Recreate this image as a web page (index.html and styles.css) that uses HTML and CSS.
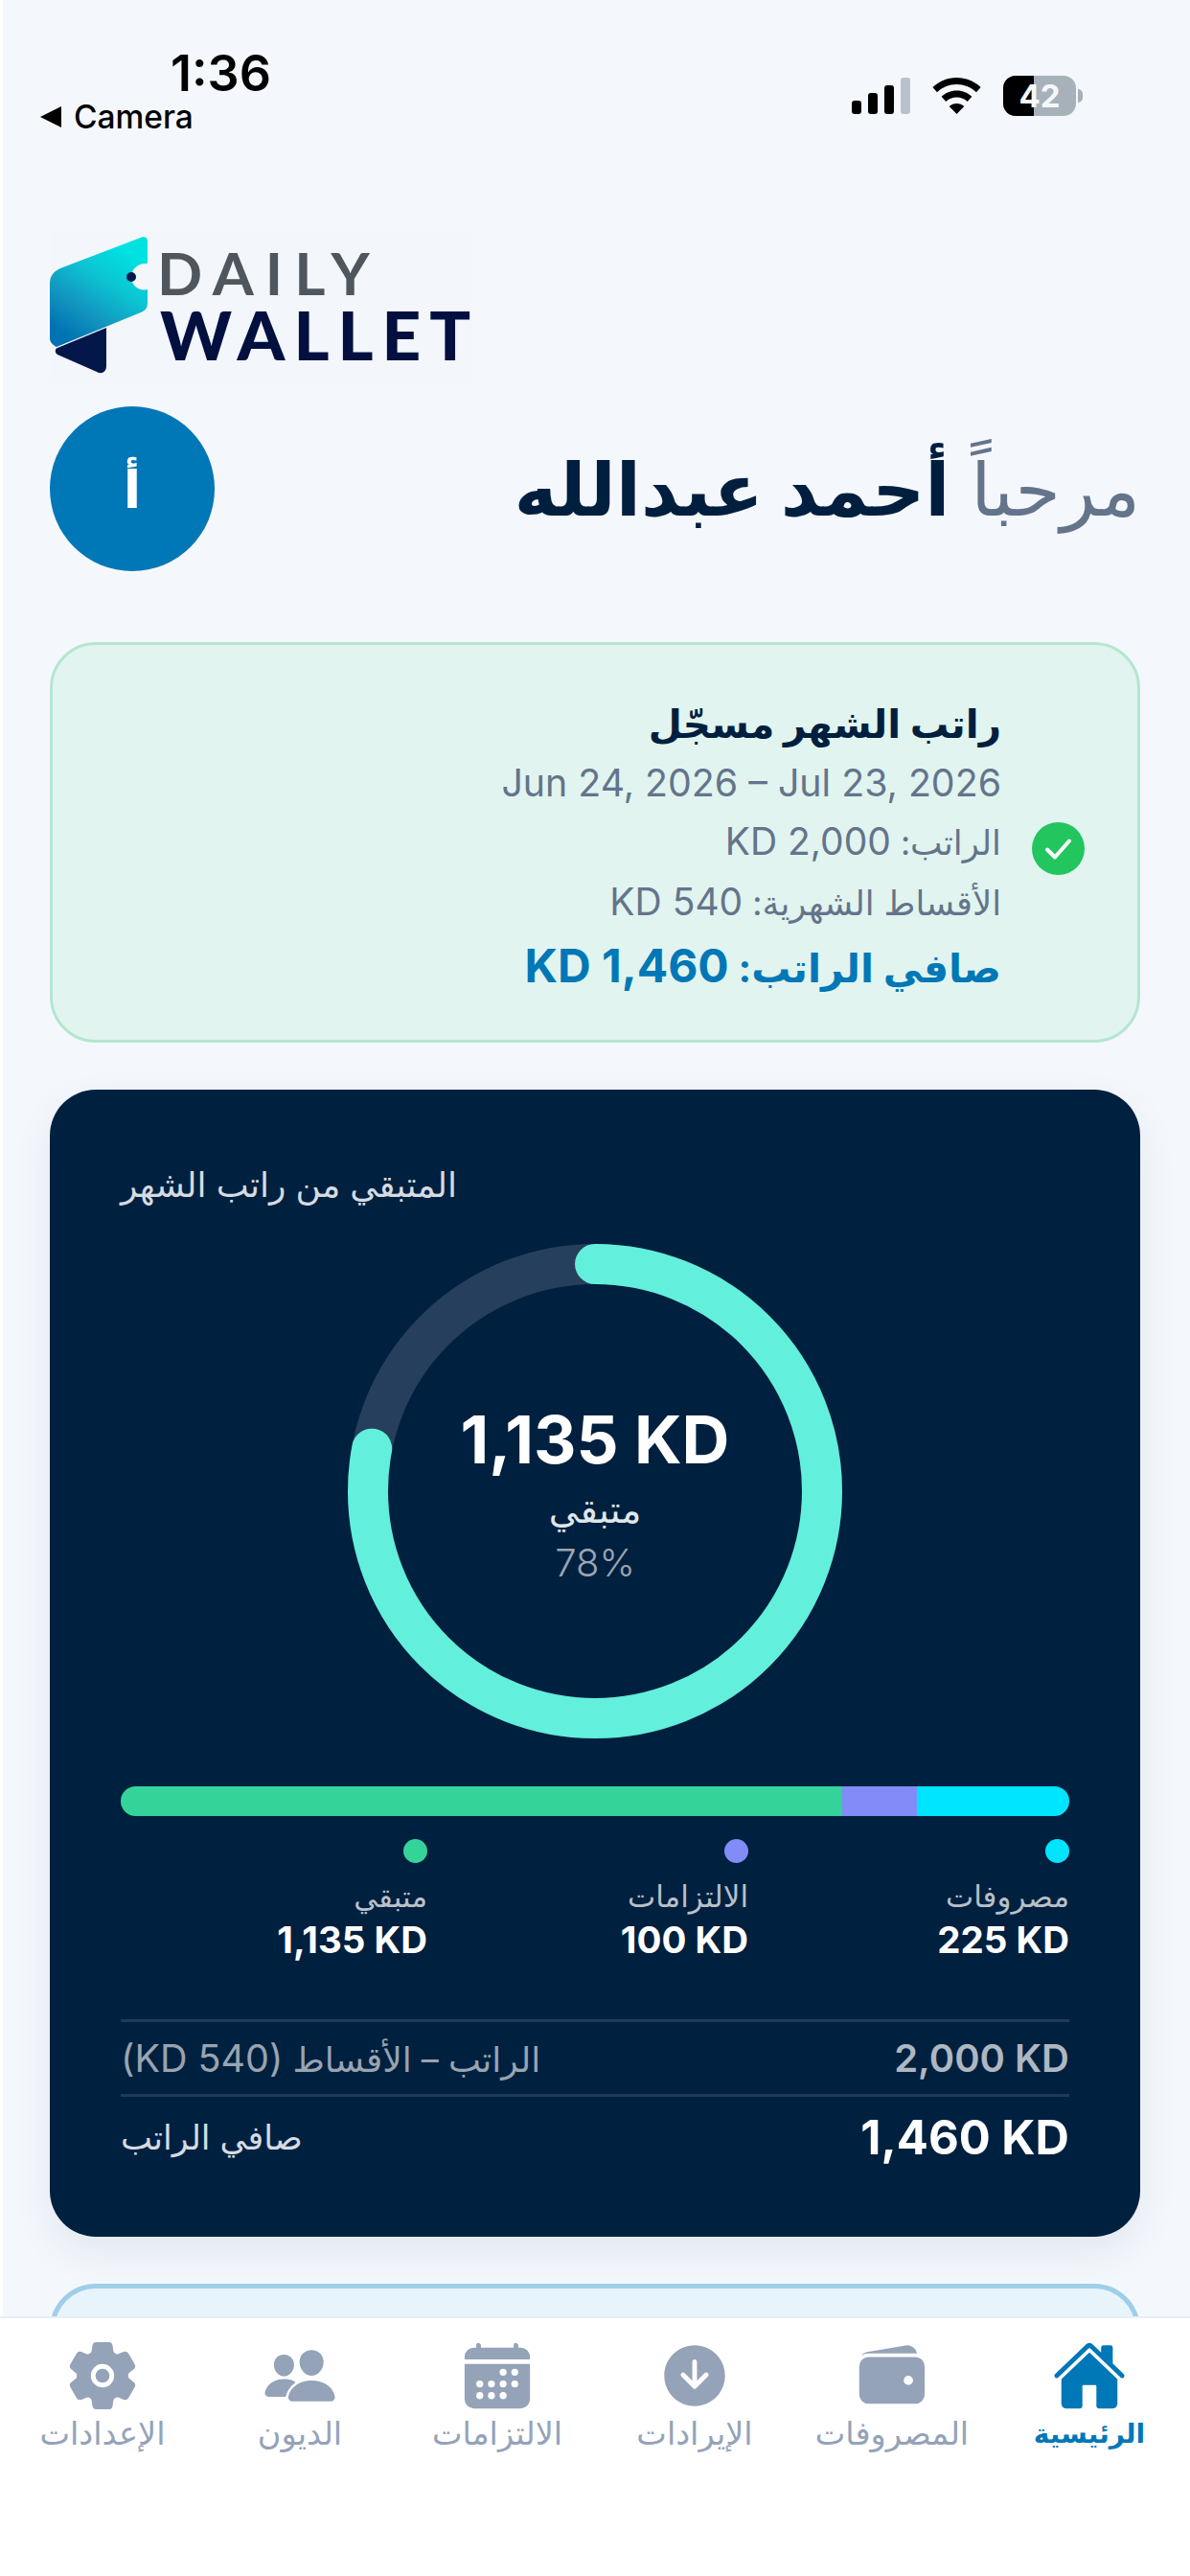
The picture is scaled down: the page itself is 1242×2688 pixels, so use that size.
FILE: index.html
```html
<!DOCTYPE html>
<html lang="ar">
<head>
    <meta charset="UTF-8">
    <meta name="viewport" content="width=device-width, initial-scale=1.0">
    <title>Daily Wallet</title>
    <link rel="stylesheet" href="styles.css">
</head>
<body>
    <div class="status-bar">
        <div class="status-left">
            <div class="status-time">1:36</div>
            <div class="status-back"><span class="back-arrow"></span>Camera</div>
        </div>
        <div class="status-right">
            <div class="signal">
                <span class="sig sig1"></span>
                <span class="sig sig2"></span>
                <span class="sig sig3"></span>
                <span class="sig sig4"></span>
            </div>
            <svg class="wifi" viewBox="0 0 51 38">
                <path d="M25.5 0C15.6 0 6.9 3.9 0.4 10.1L5 15.2C10.3 10.2 17.5 7 25.5 7s15.2 3.2 20.5 8.2l4.6-5.1C44.1 3.9 35.4 0 25.5 0z"/>
                <path d="M25.5 13.5c-6.2 0-11.8 2.4-15.9 6.3l4.7 5.1c2.9-2.7 6.9-4.4 11.2-4.4s8.3 1.7 11.2 4.4l4.7-5.1c-4.1-3.9-9.7-6.3-15.9-6.3z"/>
                <path d="M25.5 27c-3 0-5.7 1.1-7.8 3L25.5 38l7.8-8c-2.1-1.9-4.8-3-7.8-3z"/>
            </svg>
            <div class="battery">
                <div class="battery-body"><div class="battery-fill"></div><span class="battery-num">42</span></div>
                <div class="battery-nub"></div>
            </div>
        </div>
    </div>

    <div class="logo">
        <svg class="logo-mark" viewBox="0 0 102 152">
            <defs>
                <linearGradient id="walletGrad" x1="0.75" y1="0.1" x2="0.25" y2="0.95">
                    <stop offset="0" stop-color="#00e2e2"/>
                    <stop offset="0.35" stop-color="#0cc4d2"/>
                    <stop offset="0.7" stop-color="#1295bf"/>
                    <stop offset="1" stop-color="#0073b2"/>
                </linearGradient>
            </defs>
            <path d="M96 7.5c3-1 6 .5 6 4V35c-9-1-17 5-17 14s8 15 17 13v14c0 5-2 8-7 10L7 122c-4-2-7-5-7-9V56c0-8 4-13 11-16z" fill="url(#walletGrad)"/>
            <circle cx="85" cy="49" r="5" fill="#001a4a"/>
            <path d="M59 102v40c0 6-5 9-10 6L8 130c-3-2-3-6 0-7z" fill="#04174a"/>
        </svg>
        <div class="logo-text">
            <div class="logo-daily">DAILY</div>
            <div class="logo-wallet">WALLET</div>
        </div>
    </div>

    <div class="greeting-row">
        <div class="avatar">أ</div>
        <div class="greeting" dir="rtl">مرحباً <strong>أحمد عبدالله</strong></div>
    </div>

    <div class="salary-card">
        <div class="salary-info" dir="rtl">
            <div class="salary-title">راتب الشهر مسجّل</div>
            <div class="salary-line salary-date" dir="ltr">Jun 24, 2026 – Jul 23, 2026</div>
            <div class="salary-line">الراتب: <span class="num">KD 2,000</span></div>
            <div class="salary-line">الأقساط الشهرية: <span class="num">KD 540</span></div>
            <div class="salary-net">صافي الراتب: <span class="num">KD 1,460</span></div>
        </div>
        <svg class="check" viewBox="0 0 55 55">
            <circle cx="27.5" cy="27.5" r="27.5" fill="#22c55e"/>
            <path d="M16 28.5l8 8 15-17" fill="none" stroke="#fff" stroke-width="4" stroke-linecap="round" stroke-linejoin="round"/>
        </svg>
    </div>

    <div class="balance-card">
        <div class="balance-label">المتبقي من راتب الشهر</div>
        <div class="ring-wrap">
            <svg class="ring" viewBox="0 0 516 516">
                <circle cx="258" cy="258" r="237" fill="none" stroke="#263f5c" stroke-width="42"/>
                <circle cx="258" cy="258" r="237" fill="none" stroke="#62efdb" stroke-width="42" stroke-linecap="round"
                        stroke-dasharray="1161 1489" transform="rotate(-90 258 258)"/>
            </svg>
            <div class="ring-center">
                <div class="ring-value">1,135 KD</div>
                <div class="ring-name">متبقي</div>
                <div class="ring-pct">78%</div>
            </div>
        </div>

        <div class="split-bar">
            <div class="split split-green"></div>
            <div class="split split-purple"></div>
            <div class="split split-cyan"></div>
        </div>

        <div class="legend">
            <div class="legend-item">
                <span class="dot dot-green"></span>
                <div class="legend-name">متبقي</div>
                <div class="legend-value">1,135 KD</div>
            </div>
            <div class="legend-item">
                <span class="dot dot-purple"></span>
                <div class="legend-name">الالتزامات</div>
                <div class="legend-value">100 KD</div>
            </div>
            <div class="legend-item">
                <span class="dot dot-cyan"></span>
                <div class="legend-name">مصروفات</div>
                <div class="legend-value">225 KD</div>
            </div>
        </div>

        <div class="sum-row sum-muted">
            <div class="sum-note" dir="rtl">الراتب – الأقساط <span class="num">(KD 540)</span></div>
            <div class="sum-gross">2,000 KD</div>
        </div>
        <div class="sum-row sum-total">
            <div class="sum-name">صافي الراتب</div>
            <div class="sum-value">1,460 KD</div>
        </div>
    </div>

    <div class="next-card"></div>

    <nav class="tab-bar">
        <div class="tab">
            <svg viewBox="0 0 512 512"><circle cx="256" cy="256" r="48"/><path d="M470.39 300l-.47-.38-31.56-24.75a16.11 16.11 0 01-6.1-13.33v-11.56a16 16 0 016.11-13.22L469.92 212l.47-.38a26.68 26.68 0 005.9-34.06l-42.71-73.9a1.59 1.59 0 01-.13-.22A26.86 26.86 0 00401 92.14l-.35.13-37.1 14.93a15.94 15.94 0 01-14.47-1.29q-4.92-3.1-10-5.86a15.94 15.94 0 01-8.19-11.82l-5.59-39.59-.12-.72A27.22 27.22 0 00298.76 26h-85.52a26.92 26.92 0 00-26.45 22.39l-.09.56-5.57 39.67a16 16 0 01-8.13 11.82 175.21 175.21 0 00-10 5.82 15.92 15.92 0 01-14.43 1.27l-37.13-15-.35-.14a26.87 26.87 0 00-32.48 11.34l-.13.22-42.77 73.95a26.71 26.71 0 005.9 34.1l.47.38 31.56 24.75a16.11 16.11 0 016.1 13.33v11.56a16 16 0 01-6.11 13.22L42.08 300l-.47.38a26.68 26.68 0 00-5.9 34.06l42.71 73.9a1.59 1.59 0 01.13.22 26.86 26.86 0 0032.45 11.3l.35-.13 37.07-14.93a15.94 15.94 0 0114.47 1.29q4.92 3.11 10 5.86a15.94 15.94 0 018.19 11.82l5.56 39.59.12.72A27.22 27.22 0 00213.24 486h85.52a26.92 26.92 0 0026.45-22.39l.09-.56 5.57-39.67a16 16 0 018.18-11.82c3.42-1.84 6.76-3.79 10-5.82a15.92 15.92 0 0114.43-1.27l37.13 14.95.35.14a26.85 26.85 0 0032.48-11.34 2.53 2.53 0 01.13-.22l42.71-73.89a26.7 26.7 0 00-5.89-34.11zm-134.48-40.24a80 80 0 11-83.66-83.67 80.21 80.21 0 0183.66 83.67z"/></svg>
            <span>الإعدادات</span>
        </div>
        <div class="tab">
            <svg viewBox="0 0 512 512"><path d="M336 256c-20.56 0-40.44-9.18-56-25.84-15.13-16.25-24.37-37.92-26-61-1.74-24.62 5.77-47.26 21.14-63.76S312 80 336 80c23.83 0 45.38 9.06 60.7 25.52 15.47 16.62 23 39.22 21.26 63.63-1.67 23.11-10.9 44.77-26 61C376.44 246.82 356.57 256 336 256zM467.83 432H204.18a27.71 27.71 0 01-22-10.67 30.22 30.22 0 01-5.26-25.79c8.42-33.81 29.28-61.85 60.32-81.08C264.79 297.4 299.86 288 336 288c36.85 0 71 9 98.71 26.05 31.11 19.13 52 47.33 60.38 81.55a30.27 30.27 0 01-5.32 25.78A27.68 27.68 0 01467.83 432zM147 260c-35.19 0-66.13-32.72-69-72.93-1.42-20.6 5-39.65 18-53.62 12.86-13.83 31-21.45 51-21.45s38 7.66 50.93 21.57c13.1 14.08 19.5 33.09 18 53.52-2.87 40.2-33.8 72.91-68.93 72.91zM212.66 291.45c-17.59-8.6-40.42-12.9-65.65-12.9-29.46 0-58.07 7.68-80.57 21.62-25.51 15.83-42.67 38.88-49.6 66.71a27.39 27.39 0 005.36 23.56A25.32 25.32 0 0042.4 400h111a8 8 0 007.87-6.57c.11-.63.25-1.26.41-1.88 8.48-34.06 28.35-62.84 57.71-83.82a8 8 0 00-.63-13.39c-1.57-.92-3.37-1.89-6.1-2.89z"/></svg>
            <span>الديون</span>
        </div>
        <div class="tab">
            <svg viewBox="0 0 512 512"><path d="M480 128a64 64 0 00-64-64h-16V48.45c0-8.61-6.62-16-15.23-16.43A16 16 0 00368 48v16H144V48.45c0-8.61-6.62-16-15.23-16.43A16 16 0 00112 48v16H96a64 64 0 00-64 64v12a4 4 0 004 4h440a4 4 0 004-4zM32 416a64 64 0 0064 64h320a64 64 0 0064-64V179a3 3 0 00-3-3H35a3 3 0 00-3 3zM376 208a24 24 0 11-24 24 24 24 0 0124-24zM376 288a24 24 0 11-24 24 24 24 0 0124-24zM296 208a24 24 0 11-24 24 24 24 0 0124-24zM296 288a24 24 0 11-24 24 24 24 0 0124-24zM296 368a24 24 0 11-24 24 24 24 0 0124-24zM216 288a24 24 0 11-24 24 24 24 0 0124-24zM216 368a24 24 0 11-24 24 24 24 0 0124-24zM136 288a24 24 0 11-24 24 24 24 0 0124-24zM136 368a24 24 0 11-24 24 24 24 0 0124-24z"/></svg>
            <span>الالتزامات</span>
        </div>
        <div class="tab">
            <svg viewBox="0 0 512 512"><path d="M256 48C141.13 48 48 141.13 48 256s93.13 208 208 208 208-93.13 208-208S370.87 48 256 48zm91.3 212.7l-80 80a16 16 0 01-22.6 0l-80-80a16 16 0 0122.6-22.6l52.7 52.6V160a16 16 0 0132 0v130.7l52.7-52.6a16 16 0 0122.6 22.6z"/></svg>
            <span>الإيرادات</span>
        </div>
        <div class="tab">
            <svg viewBox="0 0 512 512"><path d="M95.5 104h320a87.73 87.73 0 0111.18.71 66 66 0 00-77.51-55.56L86 94.08h-.3a66 66 0 00-41.07 26.13A87.57 87.57 0 0195.5 104zM415.5 128h-320a64.07 64.07 0 00-64 64v192a64.07 64.07 0 0064 64h320a64.07 64.07 0 0064-64V192a64.07 64.07 0 00-64-64zM368 320a32 32 0 1132-32 32 32 0 01-32 32z"/></svg>
            <span>المصروفات</span>
        </div>
        <div class="tab tab-active">
            <svg viewBox="0 0 512 512"><path d="M261.56 101.28a8 8 0 00-11.06 0L66.4 277.15a8 8 0 00-2.47 5.79L63.9 448a32 32 0 0032 32H192a16 16 0 0016-16V328a8 8 0 018-8h80a8 8 0 018 8v136a16 16 0 0016 16h96.06a32 32 0 0032-32V282.94a8 8 0 00-2.47-5.79z"/><path d="M490.91 244.15l-74.8-71.56V64a16 16 0 00-16-16h-48a16 16 0 00-16 16v32l-57.92-55.38C272.77 35.14 264.71 32 256 32c-8.68 0-16.72 3.14-22.14 8.63l-212.7 203.5c-6.22 6-7 15.87-1.34 22.37A16 16 0 0043 267.56L250.5 69.28a8 8 0 0111.06 0l207.52 198.28a16 16 0 0022.59-.44c6.14-6.36 5.63-16.86-.76-22.97z"/></svg>
            <span>الرئيسية</span>
        </div>
    </nav>
</body>
</html>
```

FILE: styles.css
```css
html, body {
    height: 100%;
}
body {
    margin: 0;
    padding: 0 52px 0 49px;
    height: 2688px;
    box-sizing: border-box;
    overflow: hidden;
    border-left: 3px solid #fff;
    background-color: #f4f8fd;
    font-family: Inter, "DejaVu Sans", sans-serif;
    color: #001f3f;
}

/* status bar */
.status-bar {
    display: flex;
    justify-content: space-between;
    align-items: flex-start;
    height: 240px;
    margin-left: -10px;
    color: #000;
}
.status-time {
    margin: 47px 0 0 136px;
    font-size: 52px;
    line-height: 60px;
    font-weight: 600;
}
.status-back {
    display: flex;
    align-items: center;
    gap: 13px;
    margin-top: -3px;
    font-size: 33.5px;
    line-height: 36px;
    font-weight: 500;
}
.back-arrow {
    width: 0;
    height: 0;
    border-top: 11px solid transparent;
    border-bottom: 11px solid transparent;
    border-right: 22px solid #000;
}
.status-right {
    display: flex;
    align-items: center;
    gap: 23px;
    margin: 79px 60px 0 0;
}
.signal {
    display: flex;
    align-items: flex-end;
    gap: 7px;
    height: 38px;
}
.sig {
    width: 10px;
    border-radius: 3px;
    background: #000;
}
.sig1 { height: 14px; }
.sig2 { height: 22px; }
.sig3 { height: 30px; }
.sig4 { height: 38px; background: #b8c2cb; }
.wifi {
    width: 51px;
    height: 38px;
    fill: #000;
}
.battery {
    display: flex;
    align-items: center;
    gap: 2px;
}
.battery-body {
    position: relative;
    width: 76px;
    height: 42px;
    border-radius: 13px;
    background: #a7b1ba;
    overflow: hidden;
}
.battery-fill {
    width: 32px;
    height: 100%;
    background: #000;
}
.battery-num {
    position: absolute;
    inset: 0;
    text-align: center;
    color: #f4f8fd;
    font-size: 33px;
    line-height: 42px;
    font-weight: 700;
}
.battery-nub {
    width: 5px;
    height: 14px;
    border-radius: 0 5px 5px 0;
    background: #a7b1ba;
}

/* logo */
.logo {
    display: flex;
    width: 441px;
    height: 160px;
    background: #f3f6fa;
}
.logo-mark {
    width: 102px;
    height: 152px;
    flex: none;
}
.logo-text {
    margin-left: 13px;
}
.logo-daily {
    margin: 14px 0 0 -3px;
    font-family: Lato, sans-serif;
    font-size: 62px;
    line-height: 60px;
    font-weight: 700;
    letter-spacing: 12px;
    color: #50565e;
}
.logo-wallet {
    font-family: Lato, sans-serif;
    font-size: 71px;
    line-height: 70px;
    font-weight: 900;
    letter-spacing: 9px;
    color: #02103f;
}

/* greeting */
.greeting-row {
    display: flex;
    justify-content: space-between;
    align-items: center;
    margin-top: 24px;
}
.avatar {
    width: 172px;
    height: 172px;
    border-radius: 50%;
    background: #0077b6;
    color: #fff;
    display: flex;
    align-items: center;
    justify-content: center;
    font-size: 54px;
    font-weight: 700;
}
.greeting {
    font-size: 76.5px;
    color: #64748b;
}
.greeting strong {
    color: #001f3f;
    font-weight: 700;
}

/* salary card */
.salary-card {
    display: flex;
    justify-content: flex-end;
    align-items: center;
    gap: 32px;
    height: 418px;
    margin-top: 74px;
    padding: 12px 55px 0 0;
    box-sizing: border-box;
    background: #e1f4ef;
    border: 3px solid #b5e6d0;
    border-radius: 48px;
}
.salary-info {
    text-align: right;
}
.salary-title {
    font-size: 40.5px;
    line-height: 60px;
    font-weight: 700;
    color: #001f3f;
}
.salary-line {
    font-size: 35.5px;
    line-height: 61px;
    color: #64748b;
}
.salary-line .num {
    font-size: 39px;
}
.salary-date {
    font-size: 39.3px;
    text-align: right;
}
.salary-net {
    font-size: 41px;
    line-height: 70px;
    font-weight: 700;
    color: #0077b6;
}
.salary-net .num {
    font-size: 48px;
}
.check {
    width: 55px;
    height: 55px;
    flex: none;
}

/* balance card */
.balance-card {
    height: 1197px;
    margin-top: 49px;
    padding: 74px 74px 0;
    box-sizing: border-box;
    background: #00203f;
    border-radius: 48px;
    box-shadow: 0 16px 40px rgba(0, 32, 63, 0.08);
    color: #fff;
}
.balance-label {
    font-size: 36px;
    line-height: 50px;
    color: #d5dbe1;
}
.ring-wrap {
    position: relative;
    width: 516px;
    height: 516px;
    margin: 37px auto 0;
}
.ring {
    width: 516px;
    height: 516px;
    display: block;
}
.ring-center {
    position: absolute;
    inset: 0;
    padding-top: 8px;
    box-sizing: border-box;
    display: flex;
    flex-direction: column;
    align-items: center;
    justify-content: center;
}
.ring-value {
    font-size: 69px;
    line-height: 76px;
    font-weight: 700;
}
.ring-name {
    margin-top: 10px;
    font-size: 39px;
    line-height: 50px;
    color: #dfe6ea;
}
.ring-pct {
    margin-top: 6px;
    font-size: 40px;
    line-height: 50px;
    font-weight: 300;
    color: #9aa6b2;
}
.split-bar {
    display: flex;
    height: 31px;
    margin-top: 50px;
    border-radius: 16px;
    overflow: hidden;
}
.split-green { width: 753px; background: #34d399; }
.split-purple { width: 78px; background: #818cf8; }
.split-cyan { flex: 1; background: #00e5ff; }

.legend {
    display: grid;
    grid-template-columns: repeat(3, 1fr);
    gap: 15px;
    margin-top: 24px;
}
.legend-item {
    display: flex;
    flex-direction: column;
    align-items: flex-end;
}
.dot {
    width: 25px;
    height: 25px;
    border-radius: 50%;
}
.dot-green { background: #34d399; }
.dot-purple { background: #818cf8; }
.dot-cyan { background: #00e5ff; }
.legend-name {
    margin-top: 12px;
    font-size: 31px;
    line-height: 46px;
    color: #b7c0c9;
}
.legend-value {
    font-size: 38.5px;
    line-height: 44px;
    font-weight: 700;
    color: #fff;
}

.sum-row {
    display: flex;
    justify-content: space-between;
    align-items: center;
    border-top: 3px solid #1e3a58;
}
.sum-muted {
    margin-top: 61px;
    height: 75px;
}
.sum-note {
    font-size: 36px;
    color: #98a4b0;
}
.sum-note .num {
    font-size: 39.5px;
}
.sum-gross {
    font-size: 40px;
    font-weight: 600;
    color: #aeb7c1;
}
.sum-total {
    height: 84px;
}
.sum-name {
    font-size: 35px;
    color: #d5dbe1;
}
.sum-value {
    font-size: 49px;
    font-weight: 700;
}

/* next card, mostly hidden behind the tab bar */
.next-card {
    height: 200px;
    margin-top: 49px;
    box-sizing: border-box;
    background: #e8f4fc;
    border: 5px solid #9fcfe8;
    border-radius: 48px;
}

/* tab bar */
.tab-bar {
    position: fixed;
    left: 0;
    right: 0;
    bottom: 0;
    height: 271px;
    display: flex;
    padding: 21px 2px 0 4px;
    box-sizing: border-box;
    background: #fff;
    border-top: 2px solid #e8edf2;
}
.tab {
    flex: 1;
    display: flex;
    flex-direction: column;
    align-items: center;
    color: #94a3b8;
    font-size: 33.5px;
    line-height: 42px;
    font-weight: 500;
}
.tab svg {
    width: 78px;
    height: 78px;
    fill: currentColor;
}
.tab-active {
    color: #0077b6;
    font-size: 28px;
    font-weight: 700;
}
```
